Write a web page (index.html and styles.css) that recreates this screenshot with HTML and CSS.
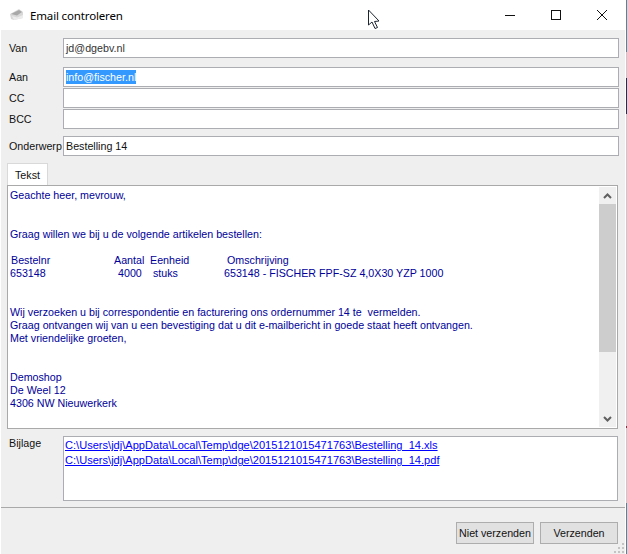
FILE: index.html
```html
<!DOCTYPE html>
<html lang="en">

<head>
    <meta charset="UTF-8">
    <title>Email controleren</title>
    <link rel="stylesheet" href="styles.css">
</head>

<body>
    <div class="window">
        <header class="titlebar">
            <svg class="app-icon" width="16" height="16" viewBox="0 0 16 16">
                <path d="M1 7 L10 2 L14 5 L14 11 L5 13 L2 12 Z" fill="#d8d8d8" />
                <path d="M2 7 L8 8.5 L13 5 L10 3 Z" fill="#a8a8a8" />
                <path d="M3 9 L8 10.5 L14 8 L14 11 L5 13 Z" fill="#ececec" />
            </svg>
            <span class="title">Email controleren</span>
            <div class="win-buttons">
                <svg width="12" height="12" viewBox="0 0 12 12"><path d="M1 6.5 H11" stroke="#111" fill="none" /></svg>
                <svg width="12" height="12" viewBox="0 0 12 12"><rect x="1.5" y="1.5" width="9" height="9" stroke="#111" fill="none" /></svg>
                <svg width="12" height="12" viewBox="0 0 12 12"><path d="M1 1 L11 11 M11 1 L1 11" stroke="#111" fill="none" /></svg>
            </div>
        </header>

        <svg class="cursor" width="14" height="21" viewBox="0 0 14 21">
            <path d="M1.5 1 V16 L5 13 L8 19.5 L10.5 18.5 L7.5 12.5 L12 12 Z" fill="#fff" stroke="#1c2430" />
        </svg>

        <main class="form">
            <div class="field field-van">
                <label>Van</label>
                <div class="input">jd@dgebv.nl</div>
            </div>
            <div class="field field-aan">
                <label>Aan</label>
                <div class="input"><span class="selected">info@fischer.nl</span></div>
            </div>
            <div class="field field-tight">
                <label>CC</label>
                <div class="input"></div>
            </div>
            <div class="field field-tight">
                <label>BCC</label>
                <div class="input"></div>
            </div>
            <div class="field field-subject">
                <label>Onderwerp</label>
                <div class="input input-dark">Bestelling 14</div>
            </div>

            <div class="tab">Tekst</div>
            <div class="body-box">
                <div class="body-text">
                    <p>Geachte heer, mevrouw,</p>
                    <p>&nbsp;</p>
                    <p>&nbsp;</p>
                    <p>Graag willen we bij u de volgende artikelen bestellen:</p>
                    <p>&nbsp;</p>
                    <p class="cols cols-head"><span class="c1">Bestelnr</span><span class="c2">Aantal</span><span class="c3">Eenheid</span><span>Omschrijving</span></p>
                    <p class="cols cols-row"><span class="c1">653148</span><span class="c2">4000</span><span class="c3">stuks</span><span>653148 - FISCHER FPF-SZ 4,0X30 YZP 1000</span></p>
                    <p>&nbsp;</p>
                    <p>&nbsp;</p>
                    <p>Wij verzoeken u bij correspondentie en facturering ons ordernummer 14 te&nbsp; vermelden.</p>
                    <p>Graag ontvangen wij van u een bevestiging dat u dit e-mailbericht in goede staat heeft ontvangen.</p>
                    <p>Met vriendelijke groeten,</p>
                    <p>&nbsp;</p>
                    <p>&nbsp;</p>
                    <p>Demoshop</p>
                    <p>De Weel 12</p>
                    <p>4306 NW Nieuwerkerk</p>
                </div>
                <div class="scrollbar">
                    <div class="arrow">
                        <svg width="9" height="6" viewBox="0 0 9 6"><path d="M1 5 L4.5 1.5 L8 5" stroke="#606060" stroke-width="2" fill="none" /></svg>
                    </div>
                    <div class="track"><div class="thumb"></div></div>
                    <div class="arrow">
                        <svg width="9" height="6" viewBox="0 0 9 6"><path d="M1 1 L4.5 4.5 L8 1" stroke="#606060" stroke-width="2" fill="none" /></svg>
                    </div>
                </div>
            </div>

            <div class="field field-attach">
                <label>Bijlage</label>
                <div class="attach-box">
                    <a href="#">C:\Users\jdj\AppData\Local\Temp\dge\2015121015471763\Bestelling_14.xls</a>
                    <a href="#">C:\Users\jdj\AppData\Local\Temp\dge\2015121015471763\Bestelling_14.pdf</a>
                </div>
            </div>
        </main>

        <footer class="footer">
            <button class="btn">Niet verzenden</button>
            <button class="btn">Verzenden</button>
            <svg class="grip" width="11" height="11" viewBox="0 0 11 11">
                <path d="M8 0h2v2H8z M4 4h2v2H4z M8 4h2v2H8z M0 8h2v2H0z M4 8h2v2H4z M8 8h2v2H8z" fill="#c4c4c4" />
            </svg>
        </footer>
    </div>
    <div class="edge"></div>
</body>

</html>
```

FILE: styles.css
```css
html,
body {
    height: 554px;
    overflow: hidden;
}

body {
    margin: 0;
    display: flex;
    background-color: #fff;
    font-family: "Liberation Sans", Arial, sans-serif;
    font-size: 10.7px;
    color: #111;
}

.window {
    position: relative;
    width: 626px;
    flex: none;
    display: flex;
    flex-direction: column;
}

.edge {
    width: 1px;
    background: linear-gradient(#3f8fa3 0, #3f8fa3 52px, #c8c8c8 52px, #c8c8c8 78px, #12345a 78px, #12345a 114px, #c8c8c8 114px, #c8c8c8 426px, #8a2a3a 426px, #8a2a3a 428px, #c8c8c8 428px, #c8c8c8 503px, #3f8fa3 503px);
}

/* Title bar */
.titlebar {
    height: 30px;
    flex: none;
    display: flex;
    align-items: center;
    padding-left: 9px;
    background-color: #fff;
}

.app-icon {
    margin-right: 5px;
}

.title {
    font-family: "Noto Sans", sans-serif;
    font-size: 11.5px;
    letter-spacing: -0.15px;
    color: #000;
}

.win-buttons {
    margin-left: auto;
    display: flex;
    gap: 34px;
    margin-right: 18px;
}

.cursor {
    position: absolute;
    left: 367px;
    top: 9px;
}

/* Form */
.form {
    flex: none;
    height: 478px;
    box-sizing: border-box;
    margin: 0 1px 0 1px;
    padding: 8px 6px 0 6px;
    background-color: #efefef;
    border-bottom: 1px solid #a9a9a9;
}

.field {
    display: flex;
    align-items: center;
}

.field label {
    width: 56px;
    flex: none;
    padding-left: 2px;
    box-sizing: border-box;
}

.input {
    width: 556px;
    height: 20px;
    flex: none;
    box-sizing: border-box;
    border: 1px solid #abadb3;
    background-color: #fff;
    padding-left: 2px;
    line-height: 18px;
    color: #333;
}

.input-dark {
    color: #111;
}

.selected {
    display: inline-block;
    height: 14px;
    line-height: 14px;
    background-color: #3399ff;
    color: #fff;
}

.field-aan {
    margin-top: 9px;
}

.field-tight {
    margin-top: 1px;
}

.field-subject {
    margin-top: 7px;
}

.tab {
    width: 41px;
    height: 22px;
    margin-top: 7px;
    box-sizing: border-box;
    border: 1px solid #d9d9d9;
    border-bottom: none;
    background-color: #fff;
    text-align: center;
    line-height: 23px;
}

.body-box {
    width: 611px;
    height: 244px;
    box-sizing: border-box;
    border: 1px solid #a9a9a9;
    background-color: #fff;
    display: flex;
    justify-content: space-between;
}

.body-text {
    padding: 3px 0 0 2px;
    color: #00009a;
    line-height: 13px;
}

.body-text p {
    margin: 0;
    white-space: nowrap;
}

.cols {
    display: flex;
}

.c1 {
    width: 103px;
}

.c2 {
    width: 36px;
}

.c3 {
    width: 77px;
}

.cols-head {
    padding-left: 1px;
}

.cols-row .c1 {
    width: 108px;
}

.cols-row .c2 {
    width: 35px;
}

.cols-row .c3 {
    width: 71px;
}

.scrollbar {
    width: 17px;
    margin: 1px 1px 1px 0;
    display: flex;
    flex-direction: column;
    background-color: #f0f0f0;
}

.arrow {
    height: 17px;
    flex: none;
    display: flex;
    align-items: center;
    justify-content: center;
}

.track {
    flex: 1;
}

.thumb {
    height: 148px;
    background-color: #cdcdcd;
}

.field-attach {
    align-items: flex-start;
    margin-top: 7px;
}

.field-attach label {
    padding-top: 1px;
}

.attach-box {
    width: 555px;
    height: 65px;
    box-sizing: border-box;
    border: 1px solid #abadb3;
    background-color: #fff;
    padding: 1px 0 0 1px;
    font-size: 11.09px;
    line-height: 15px;
}

.attach-box a {
    display: block;
    color: #0000ff;
}

/* Footer */
.footer {
    position: relative;
    flex: 1;
    margin: 0 1px;
    display: flex;
    justify-content: flex-end;
    align-items: flex-start;
    gap: 6px;
    padding: 14px 7px 0 0;
    background-color: #efefef;
}

.btn {
    width: 78px;
    height: 22px;
    padding: 0;
    border: 1px solid #adadad;
    background-color: #e1e1e1;
    font-family: "Liberation Sans", Arial, sans-serif;
    font-size: 10.7px;
    color: #111;
}

.grip {
    position: absolute;
    right: 0;
    bottom: 0;
}
```
